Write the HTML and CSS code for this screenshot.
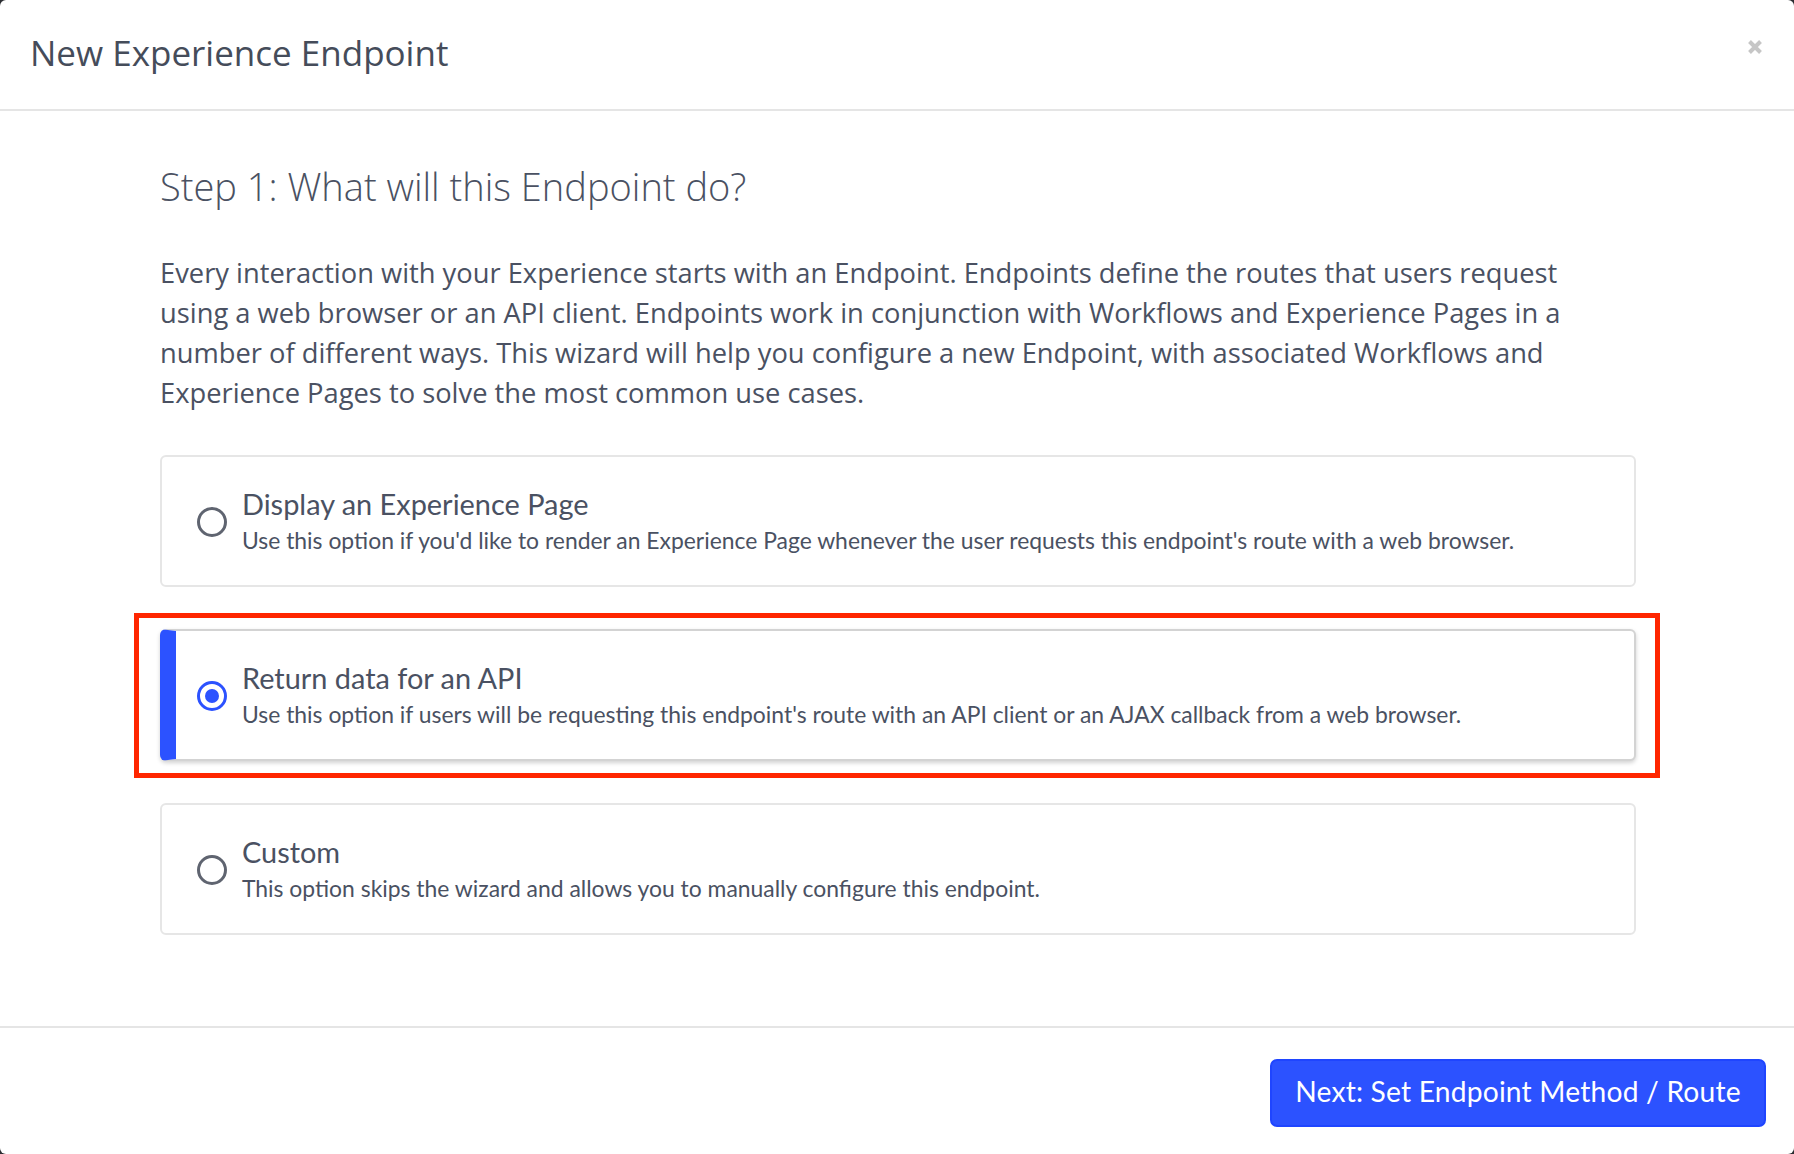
FILE: index.html
```html
<!DOCTYPE html>
<html lang="en">
<head>
<meta charset="utf-8">
<title>New Experience Endpoint</title>
<link rel="stylesheet" href="styles.css">
</head>
<body>
<div class="modal">
  <header class="modal-header">
    <h1 class="modal-title">New Experience Endpoint</h1>
    <button class="close" aria-label="Close">
      <svg width="16" height="16" viewBox="0 0 16 16"><path d="M2.5 2.5 L13.5 13.5 M13.5 2.5 L2.5 13.5" stroke="currentColor" stroke-width="4" stroke-linecap="butt"/></svg>
    </button>
  </header>
  <main class="modal-body">
    <h2 class="step-title">Step 1: What will this Endpoint do?</h2>
    <p class="intro">Every interaction with your Experience starts with an Endpoint. Endpoints define the routes that users request<br>using a web browser or an API client. Endpoints work in conjunction with Workflows and Experience Pages in a<br>number of different ways. This wizard will help you configure a new Endpoint, with associated Workflows and<br>Experience Pages to solve the most common use cases.</p>
    <div class="options">
      <label class="option">
        <span class="radio"></span>
        <span class="option-text">
          <span class="option-title">Display an Experience Page</span>
          <span class="option-desc">Use this option if you'd like to render an Experience Page whenever the user requests this endpoint's route with a web browser.</span>
        </span>
      </label>
      <div class="option-wrap">
        <label class="option selected">
          <span class="radio checked"></span>
          <span class="option-text">
            <span class="option-title">Return data for an API</span>
            <span class="option-desc">Use this option if users will be requesting this endpoint's route with an API client or an AJAX callback from a web browser.</span>
          </span>
        </label>
        <span class="highlight"></span>
      </div>
      <label class="option">
        <span class="radio"></span>
        <span class="option-text">
          <span class="option-title">Custom</span>
          <span class="option-desc">This option skips the wizard and allows you to manually configure this endpoint.</span>
        </span>
      </label>
    </div>
  </main>
  <footer class="modal-footer">
    <button class="btn-primary">Next: Set Endpoint Method / Route</button>
  </footer>
</div>
</body>
</html>
```
FILE: styles.css
```css
* { box-sizing: border-box; }
html, body { margin: 0; padding: 0; }
body {
  background: #2b2d31;
  width: 1794px;
  height: 1154px;
  overflow: hidden;
}
.modal {
  width: 1794px;
  height: 1154px;
  background: #ffffff;
  border-radius: 6px;
  display: flex;
  flex-direction: column;
  color: #4a5162;
}
.modal-header {
  height: 111px;
  border-bottom: 2px solid #e5e5e5;
  display: flex;
  justify-content: space-between;
  align-items: flex-start;
  padding: 0 31px 0 30px;
}
.modal-title {
  margin: 35px 0 0 0;
  font-family: "Open Sans", sans-serif;
  font-weight: 400;
  font-size: 35px;
  line-height: 36px;
  color: #454c5a;
}
.close {
  margin-top: 39px;
  padding: 0;
  border: 0;
  background: none;
  color: #c6c6c6;
  width: 16px;
  height: 16px;
  display: block;
}
.close svg { display: block; }
.modal-body {
  flex: 1;
  padding: 0 158px 0 160px;
}
.step-title {
  margin: 51px 0 0 0;
  font-family: "Open Sans", sans-serif;
  font-weight: 300;
  font-size: 38px;
  line-height: 48px;
  color: #4a5162;
}
.intro {
  margin: 43px 0 0 0;
  font-family: "Open Sans", sans-serif;
  font-size: 27.3px;
  line-height: 40px;
  white-space: nowrap;
  color: #4a5162;
}
.options {
  margin-top: 42px;
  display: flex;
  flex-direction: column;
  gap: 42px;
}
.option-wrap { position: relative; }
.option {
  display: flex;
  align-items: center;
  height: 132px;
  border: 2px solid #e6e6e6;
  border-radius: 6px;
  padding: 0 0 0 35px;
  background: #fff;
}
.option.selected {
  border-color: #d3d3d3;
  border-left: 16px solid #2c52ff;
  padding-left: 21px;
  box-shadow: 0 2px 4px rgba(0, 0, 0, 0.18);
}
.radio {
  flex: none;
  width: 30px;
  height: 30px;
  border: 3px solid #5f6470;
  border-radius: 50%;
  margin-right: 15px;
  margin-top: 2px;
  display: flex;
  align-items: center;
  justify-content: center;
  background: #fff;
}
.radio.checked { border-color: #2c52ff; }
.radio.checked::after {
  content: "";
  width: 14px;
  height: 14px;
  border-radius: 50%;
  background: #2c52ff;
}
.option-text {
  display: flex;
  flex-direction: column;
  padding-top: 3px;
}
.option-title {
  font-family: "Lato", sans-serif;
  font-size: 28.9px;
  line-height: 34px;
  color: #4a5162;
}
.option-desc {
  font-family: "Lato", sans-serif;
  font-size: 22.9px;
  line-height: 38px;
  color: #4a5162;
}
.highlight {
  position: absolute;
  top: -16px;
  left: -26px;
  right: -24px;
  bottom: -17px;
  border: 5px solid #ff2600;
  pointer-events: none;
}
.modal-footer {
  height: 128px;
  border-top: 2px solid #e5e5e5;
  display: flex;
  justify-content: flex-end;
  align-items: flex-start;
  padding: 31px 28px 0 0;
}
.btn-primary {
  height: 68px;
  width: 496px;
  border: 2px solid #1f45ff;
  border-radius: 7px;
  background: #2c52ff;
  color: #ffffff;
  font-family: "Lato", sans-serif;
  font-size: 28.2px;
  padding: 0 0 4px 0;
  letter-spacing: 0.2px;
}
```
